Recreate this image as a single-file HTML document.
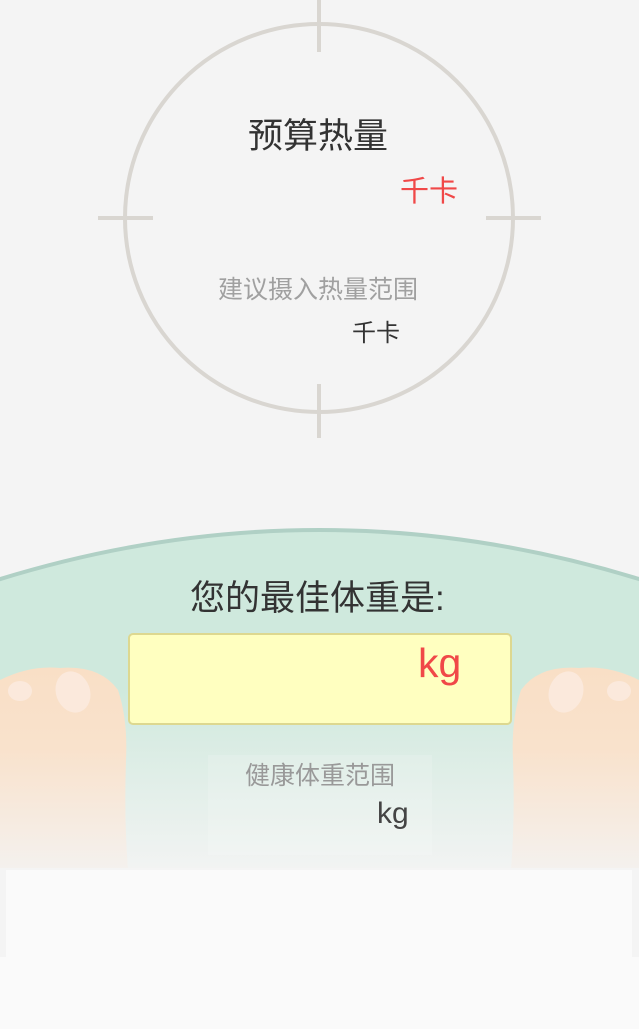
<!DOCTYPE html>
<html><head><meta charset="utf-8"><style>
body{margin:0;width:639px;height:1029px;overflow:hidden;background:#f4f4f4;font-family:"Liberation Sans","Noto Sans CJK SC",sans-serif;position:relative}
.a{position:absolute;white-space:nowrap}
</style></head><body>
<svg class="a" style="left:0;top:0" width="639" height="1029">
<defs>
<linearGradient id="g" x1="0" y1="0" x2="0" y2="1">
<stop offset="0" stop-color="#cfe9dd"/><stop offset="0.45" stop-color="#cfe9dd"/><stop offset="1" stop-color="#f4f4f4"/></linearGradient>
<linearGradient id="f" x1="0" y1="0" x2="0" y2="1">
<stop offset="0" stop-color="#f9dfc6"/><stop offset="0.4" stop-color="#f9e2cc"/><stop offset="1" stop-color="#f4f1ee"/></linearGradient>
</defs>
<circle cx="319" cy="218" r="194" fill="none" stroke="#d9d6d1" stroke-width="4"/>
<g stroke="#d9d6d1" stroke-width="4">
<line x1="319" y1="0" x2="319" y2="52"/><line x1="319" y1="384" x2="319" y2="438"/>
<line x1="98" y1="218" x2="153" y2="218"/><line x1="486" y1="218" x2="541" y2="218"/></g>
<path d="M-200 660 Q319 400 840 660 L840 880 L-200 880Z" fill="url(#g)" stroke="#b0d0c5" stroke-width="4"/>
<path d="M0 680 Q30 665 60 668 Q100 665 118 690 Q128 720 126 760 Q124 820 128 870 L0 870Z" fill="url(#f)"/>
<path d="M639 680 Q609 665 579 668 Q539 665 521 690 Q511 720 513 760 Q515 820 511 870 L639 870Z" fill="url(#f)"/>
<ellipse cx="73" cy="692" rx="17" ry="21" fill="#fbe9dc" transform="rotate(-20 73 692)"/>
<ellipse cx="20" cy="691" rx="12" ry="10" fill="#fbe9dc"/>
<ellipse cx="566" cy="692" rx="17" ry="21" fill="#fbe9dc" transform="rotate(20 566 692)"/>
<ellipse cx="619" cy="691" rx="12" ry="10" fill="#fbe9dc"/>
<rect x="208" y="755" width="224" height="100" fill="#ffffff" opacity="0.15"/>
<rect x="0" y="868" width="639" height="20" fill="#f4f4f4"/>
<rect x="6" y="870" width="626" height="87" fill="#fafafa"/>
<rect x="0" y="957" width="639" height="72" fill="#fafafa"/>
</svg>
<div class="a" style="left:248px;top:108px;font-size:35px;color:#333">预算热量</div>
<div class="a" style="left:400px;top:168px;font-size:29px;color:#f04848">千卡</div>
<div class="a" style="left:218px;top:270px;font-size:25px;color:#a0a0a0">建议摄入热量范围</div>
<div class="a" style="left:352px;top:313px;font-size:24px;color:#333">千卡</div>
<div class="a" style="left:190px;top:570px;font-size:35px;color:#333">您的最佳体重是:</div>
<div class="a" style="left:128px;top:633px;width:380px;height:88px;background:#ffffc0;border:2px solid #ddd890;border-radius:5px"></div>
<div class="a" style="left:418px;top:640px;font-size:41px;color:#f04848">kg</div>
<div class="a" style="left:245px;top:756px;font-size:25px;color:#999">健康体重范围</div>
<div class="a" style="left:377px;top:797px;font-size:30px;color:#444">kg</div>
</body></html>
